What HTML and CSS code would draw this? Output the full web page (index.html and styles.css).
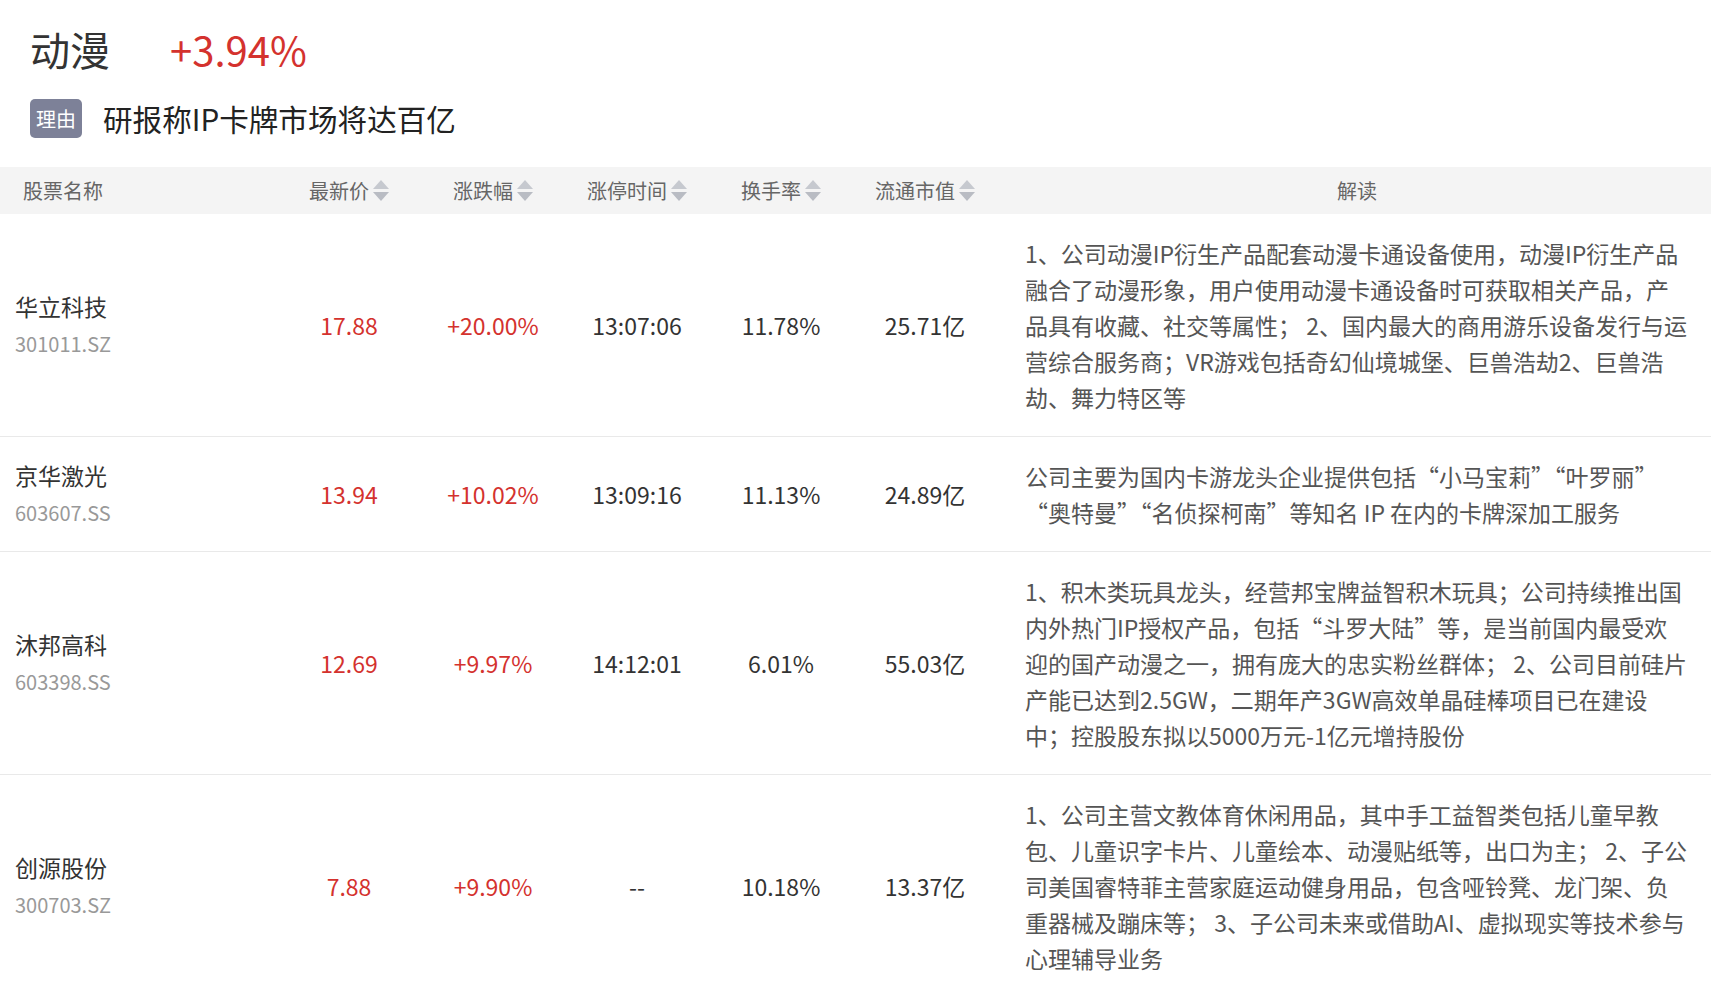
FILE: index.html
```html
<!DOCTYPE html>
<html lang="zh-CN">
<head>
<meta charset="utf-8">
<title>动漫</title>
<link rel="stylesheet" href="styles.css">
</head>
<body>
<div class="page">
  <div class="title">
    <span class="title-name">动漫</span>
    <span class="title-pct">+3.94%</span>
  </div>
  <div class="reason">
    <span class="badge">理由</span>
    <span class="reason-text">研报称IP卡牌市场将达百亿</span>
  </div>

  <div class="table">
    <div class="thead">
      <div class="th th-name">股票名称</div>
      <div class="th">最新价<svg class="sort" viewBox="0 0 16 21"><polygon class="up" points="8,0 16,9 0,9"/><polygon class="down" points="0,12 16,12 8,21"/></svg></div>
      <div class="th">涨跌幅<svg class="sort" viewBox="0 0 16 21"><polygon class="up" points="8,0 16,9 0,9"/><polygon class="down" points="0,12 16,12 8,21"/></svg></div>
      <div class="th">涨停时间<svg class="sort" viewBox="0 0 16 21"><polygon class="up" points="8,0 16,9 0,9"/><polygon class="down" points="0,12 16,12 8,21"/></svg></div>
      <div class="th">换手率<svg class="sort" viewBox="0 0 16 21"><polygon class="up" points="8,0 16,9 0,9"/><polygon class="down" points="0,12 16,12 8,21"/></svg></div>
      <div class="th">流通市值<svg class="sort" viewBox="0 0 16 21"><polygon class="up" points="8,0 16,9 0,9"/><polygon class="down" points="0,12 16,12 8,21"/></svg></div>
      <div class="th th-desc">解读</div>
    </div>

    <div class="tr">
      <div class="td td-name"><div class="stock">华立科技</div><div class="code">301011.SZ</div></div>
      <div class="td red">17.88</div>
      <div class="td red">+20.00%</div>
      <div class="td">13:07:06</div>
      <div class="td">11.78%</div>
      <div class="td">25.71亿</div>
      <div class="td desc">1、公司动漫IP衍生产品配套动漫卡通设备使用，动漫IP衍生产品<br>融合了动漫形象，用户使用动漫卡通设备时可获取相关产品，产<br>品具有收藏、社交等属性； 2、国内最大的商用游乐设备发行与运<br>营综合服务商；VR游戏包括奇幻仙境城堡、巨兽浩劫2、巨兽浩<br>劫、舞力特区等</div>
    </div>

    <div class="tr">
      <div class="td td-name"><div class="stock">京华激光</div><div class="code">603607.SS</div></div>
      <div class="td red">13.94</div>
      <div class="td red">+10.02%</div>
      <div class="td">13:09:16</div>
      <div class="td">11.13%</div>
      <div class="td">24.89亿</div>
      <div class="td desc">公司主要为国内卡游龙头企业提供包括“小马宝莉”“叶罗丽”<br>“奥特曼”“名侦探柯南”等知名 IP 在内的卡牌深加工服务</div>
    </div>

    <div class="tr">
      <div class="td td-name"><div class="stock">沐邦高科</div><div class="code">603398.SS</div></div>
      <div class="td red">12.69</div>
      <div class="td red">+9.97%</div>
      <div class="td">14:12:01</div>
      <div class="td">6.01%</div>
      <div class="td">55.03亿</div>
      <div class="td desc">1、积木类玩具龙头，经营邦宝牌益智积木玩具；公司持续推出国<br>内外热门IP授权产品，包括“斗罗大陆”等，是当前国内最受欢<br>迎的国产动漫之一，拥有庞大的忠实粉丝群体； 2、公司目前硅片<br>产能已达到2.5GW，二期年产3GW高效单晶硅棒项目已在建设<br>中；控股股东拟以5000万元-1亿元增持股份</div>
    </div>

    <div class="tr">
      <div class="td td-name"><div class="stock">创源股份</div><div class="code">300703.SZ</div></div>
      <div class="td red">7.88</div>
      <div class="td red">+9.90%</div>
      <div class="td">--</div>
      <div class="td">10.18%</div>
      <div class="td">13.37亿</div>
      <div class="td desc">1、公司主营文教体育休闲用品，其中手工益智类包括儿童早教<br>包、儿童识字卡片、儿童绘本、动漫贴纸等，出口为主； 2、子公<br>司美国睿特菲主营家庭运动健身用品，包含哑铃凳、龙门架、负<br>重器械及蹦床等； 3、子公司未来或借助AI、虚拟现实等技术参与<br>心理辅导业务</div>
    </div>
  </div>
</div>
</body>
</html>
```

FILE: styles.css
```css
* { box-sizing: border-box; }
html, body {
  margin: 0;
  padding: 0;
  background: #ffffff;
}
body {
  font-family: "Noto Sans CJK SC", "Noto Sans", sans-serif;
  color: #333333;
}
.page {
  width: 1711px;
}
.title {
  display: flex;
  align-items: center;
  height: 48px;
  margin-top: 25px;
  padding-left: 30px;
  font-size: 40px;
  line-height: 48px;
}
.title-name {
  color: #333333;
  margin-right: 60px;
}
.title-pct {
  color: #d4322e;
}
.reason {
  display: flex;
  align-items: center;
  margin-top: 26px;
  padding-left: 30px;
  height: 39px;
}
.badge {
  display: inline-flex;
  align-items: center;
  justify-content: center;
  width: 52px;
  height: 39px;
  border-radius: 5px;
  background: #7d8198;
  color: #ffffff;
  font-size: 20px;
}
.reason-text {
  margin-left: 21px;
  font-size: 29.6px;
  color: #222222;
}
.table {
  margin-top: 29px;
}
.thead, .tr {
  display: grid;
  grid-template-columns: 277px repeat(5, 144px) 1fr;
  align-items: center;
}
.thead {
  height: 47px;
  background: #f4f4f4;
  color: #666666;
  font-size: 20px;
}
.th {
  display: flex;
  align-items: center;
  justify-content: center;
}
.th-name {
  justify-content: flex-start;
  padding-left: 23px;
}
.th-desc {
  padding-left: 6px;
}
.sort {
  width: 16px;
  height: 21px;
  margin-left: 4px;
}
.sort .up {
  fill: #c6c9cf;
}
.sort .down {
  fill: #b9bcc3;
}
.tr {
  border-bottom: 1px solid #e9e9e9;
  font-size: 23px;
}
.td {
  text-align: center;
  color: #333333;
}
.td.red {
  color: #d4322e;
}
.td-name {
  text-align: left;
  padding-left: 15px;
  line-height: 37px;
}
.stock {
  color: #333333;
}
.code {
  color: #999999;
  font-size: 20px;
}
.desc {
  text-align: left;
  padding: 21px 10px 21px 28px;
  line-height: 36px;
  color: #555555;
  white-space: nowrap;
}
```
